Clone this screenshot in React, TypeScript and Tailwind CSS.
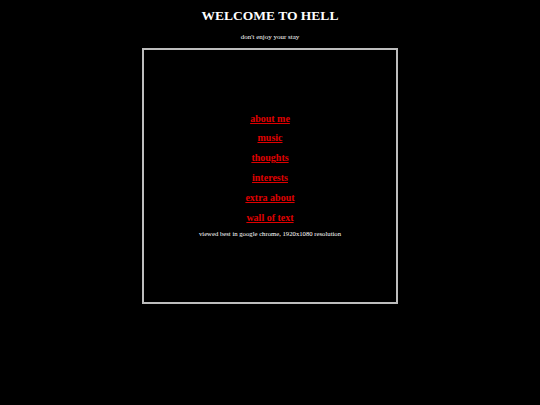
import React from "react";

const links = ["about me", "music", "thoughts", "interests", "extra about", "wall of text"];

const App: React.FC = () => {
  return (
    <div className="min-h-[405px] bg-black text-white font-['Liberation_Serif',serif] flex flex-col items-center">
      <h1 className="mt-[8px] text-[13.5px] font-bold leading-[16px]">WELCOME TO HELL</h1>
      <p className="mt-[9px] text-[7px] leading-[8px]">don't enjoy your stay</p>
      <div className="mt-[7px] w-[256px] h-[256px] border-2 border-[#bdbdbd] pb-[2px] flex flex-col items-center justify-center">
        {links.map((l) => (
          <a
            key={l}
            href="#"
            className="text-[10px] font-bold leading-[19.8px] text-[#e00000] underline"
          >
            {l}
          </a>
        ))}
        <p className="text-[6.7px] leading-[14px]">viewed best in google chrome, 1920x1080 resolution</p>
      </div>
    </div>
  );
};

export default App;
